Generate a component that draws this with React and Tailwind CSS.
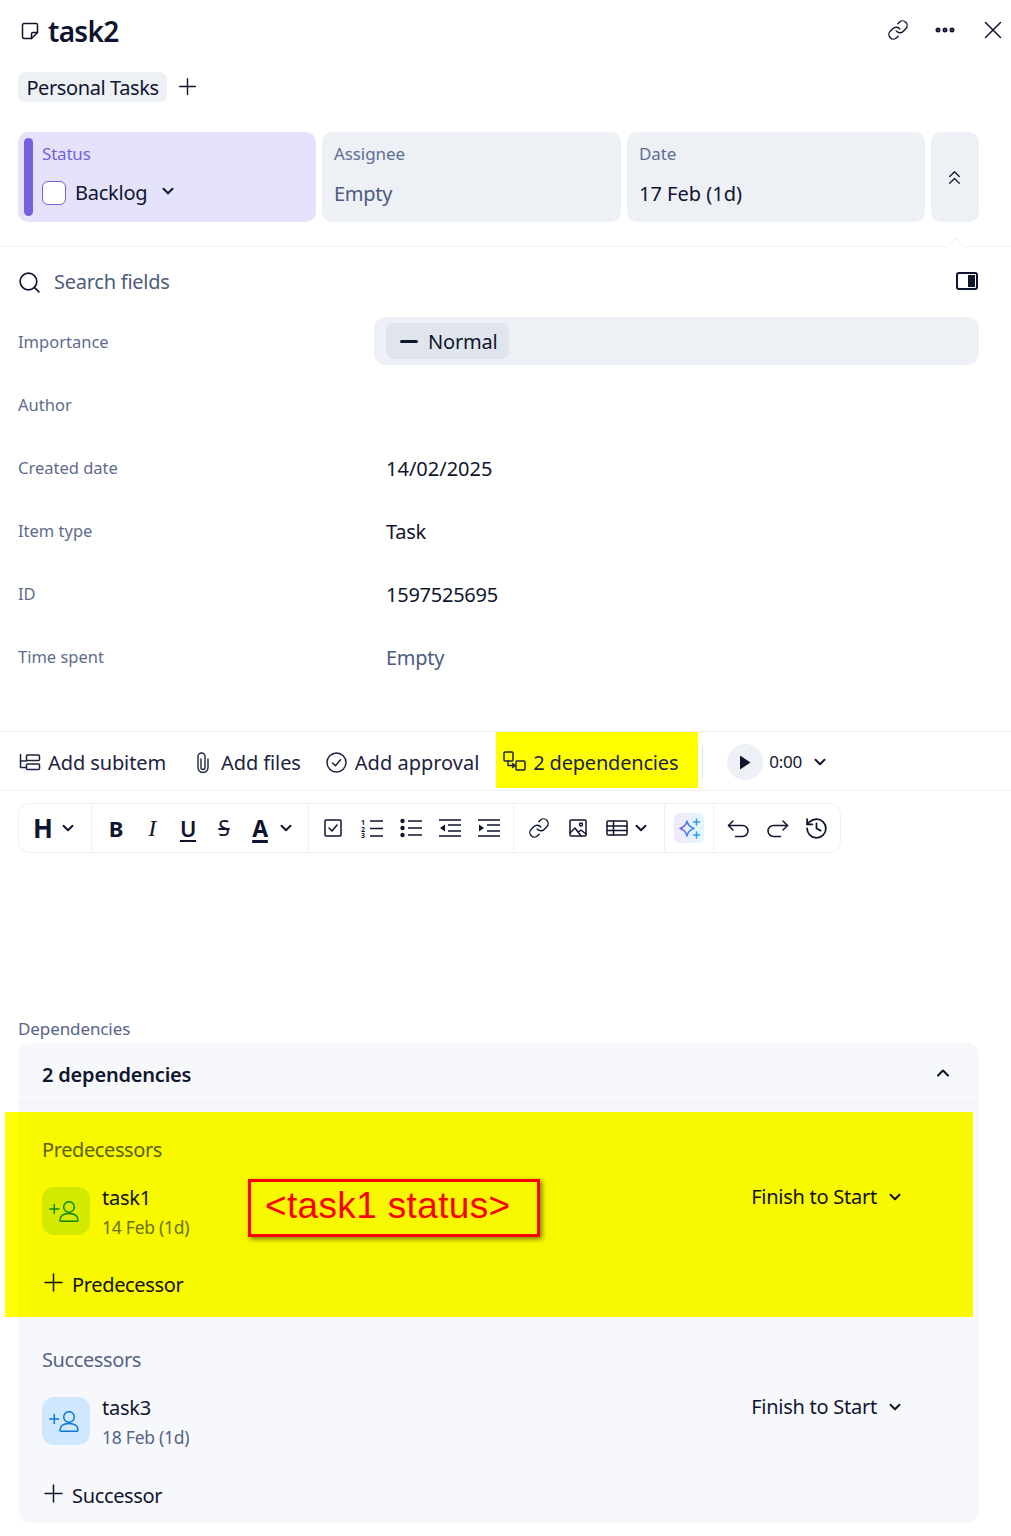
import React from "react";
import { ChevronDown, ChevronUp, ChevronsUp, Link, MoreHorizontal, X, Plus, Search, History } from "lucide-react";

const Svg = ({ children, s = 20, cls = "", vb = "0 0 20 20" }) => (
  <svg width={s} height={s} viewBox={vb} fill="none" stroke="currentColor" strokeWidth="1.5" strokeLinecap="round" strokeLinejoin="round" className={"shrink-0 " + cls}>{children}</svg>
);

const Note = () => (
  <Svg s={18} vb="0 0 18 18"><path d="M3 1.500h12a1.500 1.500 0 0 1 1.500 1.500v7.500l-6 6H3A1.500 1.500 0 0 1 1.500 15V3A1.500 1.500 0 0 1 3 1.500Z" /><path d="M16.500 10.500H12a1.500 1.500 0 0 0-1.500 1.500v4.500" /></Svg>
);
const Subitem = () => (
  <Svg s={22} vb="0 0 22 22"><path d="M1.500 2.500v13h6" /><path d="M1.500 9h6" /><rect x="7.500" y="3" width="13" height="5.500" rx="1" /><rect x="7.500" y="12" width="13" height="5.500" rx="1" /></Svg>
);
const Clip = () => (
  <svg width="12" height="21" viewBox="0 0 12 21" fill="none" stroke="currentColor" strokeWidth="1.400" strokeLinecap="round" className="shrink-0"><path d="M4 7v8.500a2 2 0 0 0 4 0V4.500a3.500 3.500 0 0 0-7 0v11a5 5 0 0 0 10 0V7" /></svg>
);
const Approval = () => (
  <Svg s={21} vb="0 0 21 21"><circle cx="10.500" cy="10.500" r="9.500" /><path d="m6.500 11 3 2.800 5-6" /></Svg>
);
const Deps = () => (
  <Svg s={23} vb="0 0 23 23"><rect x="1" y="1" width="9" height="9" rx="1" /><rect x="13" y="10" width="9" height="9" rx="1" /><path d="M5 10v4.500h6" /><path d="m9.500 12.500 2.500 2-2.500 2" fill="currentColor" /></Svg>
);
const Person = ({ color }) => (
  <svg width="30" height="21" viewBox="0 0 30 21" fill="none" stroke={color} strokeWidth="1.500" strokeLinecap="round" strokeLinejoin="round" className="-ml-1">
    <path d="M.8 8h9M5.300 3.500v9" />
    <circle cx="20" cy="6" r="5.300" />
    <path d="M11 19.500c0-4.500 3.500-7 9-7s9 2.500 9 7c0 .5-.5.7-1 .7H12c-.5 0-1-.2-1-.7Z" />
  </svg>
);

const Card = ({ label, children, cls = "w-[299px]" }) => (
  <div className={"h-[90px] rounded-[10px] bg-[#edf0f5] pl-3 " + cls}>
    <div className="mt-[10px] h-6 text-[17px] leading-6 tracking-[-0.1px] text-[#5e6f94]">{label}</div>
    {children}
  </div>
);

const Field = ({ label, children }) => (
  <div className="flex h-[63px] items-center pl-[18px] pr-8">
    <div className="w-[368px] pt-[2px] text-[16.500px] tracking-normal text-[#5e6c8c]">{label}</div>
    {children}
  </div>
);
const Value = ({ cls = "", children }) => <span className={"pt-[2px] text-[20px] " + cls}>{children}</span>;

const Action = ({ icon, children, cls = "" }) => (
  <div className={"flex h-[56px] items-center gap-[7px] pt-[5px] text-[20px] tracking-[-0.1px] text-[#1c2340] " + cls}>{icon}<span>{children}</span></div>
);

const Tool = ({ w = "w-[36px]", children }) => <div className={"flex h-full items-center justify-center " + w}>{children}</div>;
const Group = ({ cls, children }) => <div className={"flex h-full items-center border-r border-[#edf0f5] " + cls}>{children}</div>;
const Chev = ({ cls = "" }) => <ChevronDown size={18} strokeWidth={2.600} className={"shrink-0 " + cls} />;

const Section = ({ cls, pt, title, titleCls, av, avIcon, name, date, dateCls, add, right, children, addMt }) => (
  <div className={"relative " + cls}>
    <div className={"box-content h-7 text-[20px] leading-7 tracking-[-0.4px] " + pt + " " + titleCls}>{title}</div>
    <div className="mt-[23px] flex h-12 items-start">
      <div className={"flex h-12 w-12 items-center justify-center rounded-[12px] " + av}>{avIcon}</div>
      <div className="ml-3">
        <div className="h-[22px] text-[20px] leading-[22px]">{name}</div>
        <div className={"mt-[6px] h-6 text-[17.500px] leading-6 " + dateCls}>{date}</div>
      </div>
      <div className={"ml-auto -mt-px flex h-[22px] items-center gap-[9px] text-[20px] " + right}>
        <span>Finish to Start</span><Chev />
      </div>
    </div>
    <div className={"-ml-[3px] flex h-7 items-center gap-1 text-[20px] tracking-[-0.35px] " + addMt}>
      <Plus size={29} strokeWidth={1.250} className="-mt-[3px]" /><span className="pt-[2px]">{add}</span>
    </div>
    {children}
  </div>
);

export default function App() {
  return (
    <div className="h-[1536px] w-[1011px] overflow-hidden bg-white font-['Noto_Sans','Open_Sans',sans-serif] tracking-[-0.25px] text-[#10152f]">
      <header className="flex h-[62px] items-center pl-[21px] pr-[3px]">
        <Note />
        <h1 className="ml-[9px] text-[28px] font-semibold tracking-[-0.7px]">task2</h1>
        <div className="-mt-[3px] ml-auto flex items-center">
          <Link size={22} strokeWidth={1.500} className="mr-[24px]" />
          <MoreHorizontal size={24} strokeWidth={3} className="mr-[21px]" />
          <X size={30} strokeWidth={1.200} />
        </div>
      </header>

      <div className="mt-[10px] flex h-[30px] items-center pl-[18px]">
        <span className="flex h-[30px] w-[149px] items-center justify-center rounded-[7px] bg-[#edf0f5] pt-[2px] text-[20px] tracking-[-0.4px]">Personal Tasks</span>
        <Plus size={27} strokeWidth={1.250} className="ml-[7px] -mt-[2px]" />
      </div>

      <div className="mt-[30px] flex gap-[6px] pl-[18px]">
        <div className="flex h-[90px] w-[298px] rounded-[10px] bg-[#e4e3fb] pl-[6px] pt-[6px]">
          <div className="h-[78px] w-[9px] rounded-[5px] bg-[#7461dd]" />
          <div className="ml-[9px]">
            <div className="mt-1 h-6 text-[17px] leading-6 tracking-[-0.2px] text-[#7461dd]">Status</div>
            <div className="mt-[11px] flex items-center">
              <span className="h-6 w-6 rounded-[6px] border-[1.500px] border-[#7461dd] bg-white" />
              <span className="ml-[9px] pt-[1px] text-[20px]">Backlog</span>
              <Chev cls="ml-3 -mt-1" />
            </div>
          </div>
        </div>
        <Card label="Assignee"><div className="mt-[13px] text-[20px] text-[#4d5b7c]">Empty</div></Card>
        <Card label="Date" cls="w-[298px]"><div className="mt-[13px] text-[20px] tracking-normal">17 Feb (1d)</div></Card>
        <div className="flex h-[90px] w-[48px] items-center justify-center rounded-[10px] bg-[#edf0f5]">
          <ChevronsUp size={23} strokeWidth={1.300} className="-ml-[1px]" />
        </div>
      </div>

      <div className="relative mt-6 h-px bg-[#edf0f5]">
        <span className="absolute left-[949px] top-[-6px] h-3 w-3 rotate-45 border-l border-t border-[#edf0f5] bg-white" />
      </div>

      <div className="flex h-[63px] items-center pl-[17px] pr-[33px] pt-2">
        <Search size={25} strokeWidth={1.600} />
        <span className="-mt-[2px] ml-[12px] text-[20px] text-[#4d5b7c]">Search fields</span>
        <span className="-mt-1 ml-auto flex h-[18px] w-[22px] justify-end rounded-[3px] border-2 border-[#10152f] p-[1px]"><span className="h-full w-[7px] bg-[#10152f]" /></span>
      </div>

      <div className="flex h-[63px] items-center pb-[1px] pl-[18px] pr-8">
        <div className="w-[356px] pt-[3px] text-[16.500px] tracking-normal text-[#5e6c8c]">Importance</div>
        <div className="flex h-12 w-[605px] items-center rounded-[12px] bg-[#edf0f5] pl-3">
          <div className="flex h-9 w-[123px] items-center rounded-[8px] bg-[#e0e5ed] pl-[14px] text-[20px] tracking-[-0.2px]">
            <span className="h-[3px] w-[18px] rounded bg-[#10152f]" />
            <span className="ml-[10px] pt-[1px]">Normal</span>
          </div>
        </div>
      </div>
      <Field label="Author" />
      <Field label="Created date"><Value cls="tracking-normal">14/02/2025</Value></Field>
      <Field label="Item type"><Value>Task</Value></Field>
      <Field label="ID"><Value>1597525695</Value></Field>
      <Field label="Time spent"><Value cls="text-[#4d5b7c]">Empty</Value></Field>

      <div className="mt-[43px] flex h-[60px] items-start border-y border-[#edf0f5] pl-[19px]">
        <Action icon={<Subitem />}>Add subitem</Action>
        <Action cls="ml-[31px] gap-[12px]" icon={<Clip />}>Add files</Action>
        <Action cls="ml-[25px] gap-[8px] tracking-normal" icon={<Approval />}>Add approval</Action>
        <Action cls="ml-[17px] w-[202px] gap-[6px] bg-[#ffff00] pl-[7px] tracking-[-0.2px]" icon={<Deps />}>2 dependencies</Action>
        <div className="ml-1 mt-[15px] h-[31px] w-px bg-[#dfe3ea]" />
        <div className="ml-6 flex h-[56px] items-center pt-1">
          <span className="flex h-9 w-9 items-center justify-center rounded-full bg-[#edf0f5]">
            <svg width="12" height="15" viewBox="0 0 12 15" fill="#10152f"><path d="M1 0.500 11.500 7.500 1 14.500Z" /></svg>
          </span>
          <span className="ml-[6px] text-[17px]">0:00</span>
          <Chev cls="ml-[9px]" />
        </div>
      </div>

      <div className="ml-[18px] mt-3 flex h-[50px] w-[823px] items-center rounded-[12px] border border-[#edf0f5]">
        <Group cls="w-[73px] pl-[14px]">
          <span className="text-[26px] font-bold leading-none">H</span><Chev cls="ml-[6px]" />
        </Group>
        <Group cls="w-[217px] pl-[6px]">
          <Tool><span className="text-[22px] font-bold leading-none">B</span></Tool>
          <Tool><span className="font-['Liberation_Serif',serif] text-[24px] italic leading-none">I</span></Tool>
          <Tool><span className="text-[22px] font-semibold leading-none underline underline-offset-[3px]">U</span></Tool>
          <Tool><span className="text-[21px] leading-none line-through">S</span></Tool>
          <Tool><span className="text-[23px] font-bold leading-none underline decoration-[3px] underline-offset-[3px]">A</span></Tool>
          <Chev cls="-ml-[1px]" />
        </Group>
        <Group cls="w-[205px] pl-[4px]">
          <Tool w="w-[39px]"><Svg s={18} vb="0 0 18 18"><rect x="1" y="1" width="16" height="16" rx="1" /><path d="m5 9 3 3 5-6" /></Svg></Tool>
          <Tool w="w-[39px]"><svg width="24" height="21" viewBox="0 0 24 21" stroke="currentColor" strokeWidth="1.500"><path d="M10 3h13M10 10.500h13M10 18h13" /><text x="1" y="7" fontSize="7" fontWeight="700" fill="currentColor" stroke="none">1</text><text x="1" y="13.500" fontSize="7" fontWeight="700" fill="currentColor" stroke="none">2</text><text x="1" y="20" fontSize="7" fontWeight="700" fill="currentColor" stroke="none">3</text></svg></Tool>
          <Tool w="w-[39px]"><svg width="22" height="20" viewBox="0 0 22 20" stroke="currentColor" strokeWidth="1.500"><path d="M8 3h14M8 10h14M8 17h14" /><g fill="currentColor" stroke="none"><circle cx="2.500" cy="3" r="2.200" /><circle cx="2.500" cy="10" r="2.200" /><circle cx="2.500" cy="17" r="2.200" /></g></svg></Tool>
          <Tool w="w-[39px]"><svg width="22" height="20" viewBox="0 0 22 20" stroke="currentColor" strokeWidth="1.500"><path d="M0 2h22M9 7h13M9 13h13M0 18h22" /><path d="M6 6.500v7l-5-3.500Z" fill="currentColor" stroke="none" /></svg></Tool>
          <Tool w="w-[39px]"><svg width="22" height="20" viewBox="0 0 22 20" stroke="currentColor" strokeWidth="1.500"><path d="M0 2h22M9 7h13M9 13h13M0 18h22" /><path d="M1 6.500v7l5-3.500Z" fill="currentColor" stroke="none" /></svg></Tool>
        </Group>
        <Group cls="w-[151px] pl-[5px]">
          <Tool w="w-[39px]"><Link size={22} strokeWidth={1.500} /></Tool>
          <Tool w="w-[39px]"><Svg s={18} vb="0 0 18 18"><rect x="1" y="1" width="16" height="16" rx="1" /><circle cx="12" cy="5.500" r="1.500" /><path d="m1 14 5-5 6 8M9.500 13l2.500-2 5 4" /></Svg></Tool>
          <Tool w="w-[39px]"><Svg s={22} vb="0 0 22 18"><rect x="1" y="2" width="20" height="14" rx="1" /><path d="M1 7h20M1 11.500h20M7.500 2v14" /></Svg></Tool>
          <Chev cls="-ml-[4px]" />
        </Group>
        <Group cls="w-[49px] justify-center">
          <span className="flex h-[30px] w-[30px] items-center justify-center rounded-[6px] bg-gradient-to-r from-[#eee9fb] to-[#e1f6fd]">
            <svg width="25" height="25" viewBox="0 0 25 25" fill="none" strokeWidth="1.500" strokeLinecap="round" strokeLinejoin="round">
              <defs><linearGradient id="ai" x1="0" y1="0" x2="1" y2="0"><stop offset="0" stopColor="#7b5ce6" /><stop offset="1" stopColor="#2a9df0" /></linearGradient></defs>
              <path d="M10 5c.8 4 2.800 6.200 7 7.500-4.200 1.300-6.200 3.500-7 7.500-.8-4-2.800-6.200-7-7.500 4.200-1.300 6.200-3.500 7-7.500Z" stroke="url(#ai)" />
              <path d="M19.500 3v6M16.500 6h6M19.500 16v6M16.500 19h6" stroke="#2a9df0" />
            </svg>
          </span>
        </Group>
        <div className="flex h-full items-center pl-[5px]">
          <Tool w="w-[39px]"><Svg s={23} vb="0 0 23 23"><path d="M6 4 1.500 8.500 6 13" /><path d="M1.500 8.500h14a5.500 5.500 0 0 1 0 11h-7" /></Svg></Tool>
          <Tool w="w-[39px]"><Svg s={23} vb="0 0 23 23"><path d="m17 4 4.500 4.500L17 13" /><path d="M21.500 8.500h-14a5.500 5.500 0 0 0 0 11h7" /></Svg></Tool>
          <Tool w="w-[39px]"><History size={25} strokeWidth={1.700} /></Tool>
        </div>
      </div>

      <div className="ml-[18px] mt-[164px] h-[26px] text-[17px] leading-6 tracking-[-0.1px] text-[#56648a]">Dependencies</div>

      <div className="ml-[18px] h-[480px] w-[961px] rounded-[12px] bg-[#f7f8fb]">
        <div className="flex h-[60px] items-center justify-between border-b border-[#edf0f5] pl-6 pr-[26px] pt-1">
          <span className="text-[20px] font-semibold tracking-[-0.2px]">2 dependencies</span>
          <ChevronUp size={20} strokeWidth={2.500} className="-mt-1" />
        </div>
        <Section
          cls="-ml-[13px] mr-[6px] mt-[9px] h-[205px] bg-[#f8f900] pl-[37px] text-[#111100]"
          pt="pt-6" title="Predecessors" titleCls="text-[#5d6200]"
          av="bg-[#d3ea00]" avIcon={<Person color="#0c8a0c" />}
          name="task1" date="14 Feb (1d)" dateCls="text-[#6b7000]" add="Predecessor" right="mr-[69px]" addMt="mt-[35px]"
        >
          <div className="absolute left-0 top-0 h-full w-[13px] bg-[#ffff00]" />
          <div className="absolute left-[243px] top-[67px] flex h-[58px] w-[292px] items-center border-[3px] border-[#ff0000] pb-1 pl-[14px] font-['Liberation_Sans',sans-serif] text-[37px] tracking-[0.35px] text-[#ff0000] shadow-[2px_2px_5px_rgba(0,0,0,0.5)]">&lt;task1 status&gt;</div>
        </Section>
        <Section
          cls="h-[206px] pl-6"
          pt="pt-[29px]" title="Successors" titleCls="text-[#56648a]"
          av="bg-[#cfe8ff]" avIcon={<Person color="#0a78d8" />}
          name="task3" date="18 Feb (1d)" dateCls="text-[#56648a]" add="Successor" right="mr-[75px]" addMt="mt-9"
        />
      </div>
    </div>
  );
}
